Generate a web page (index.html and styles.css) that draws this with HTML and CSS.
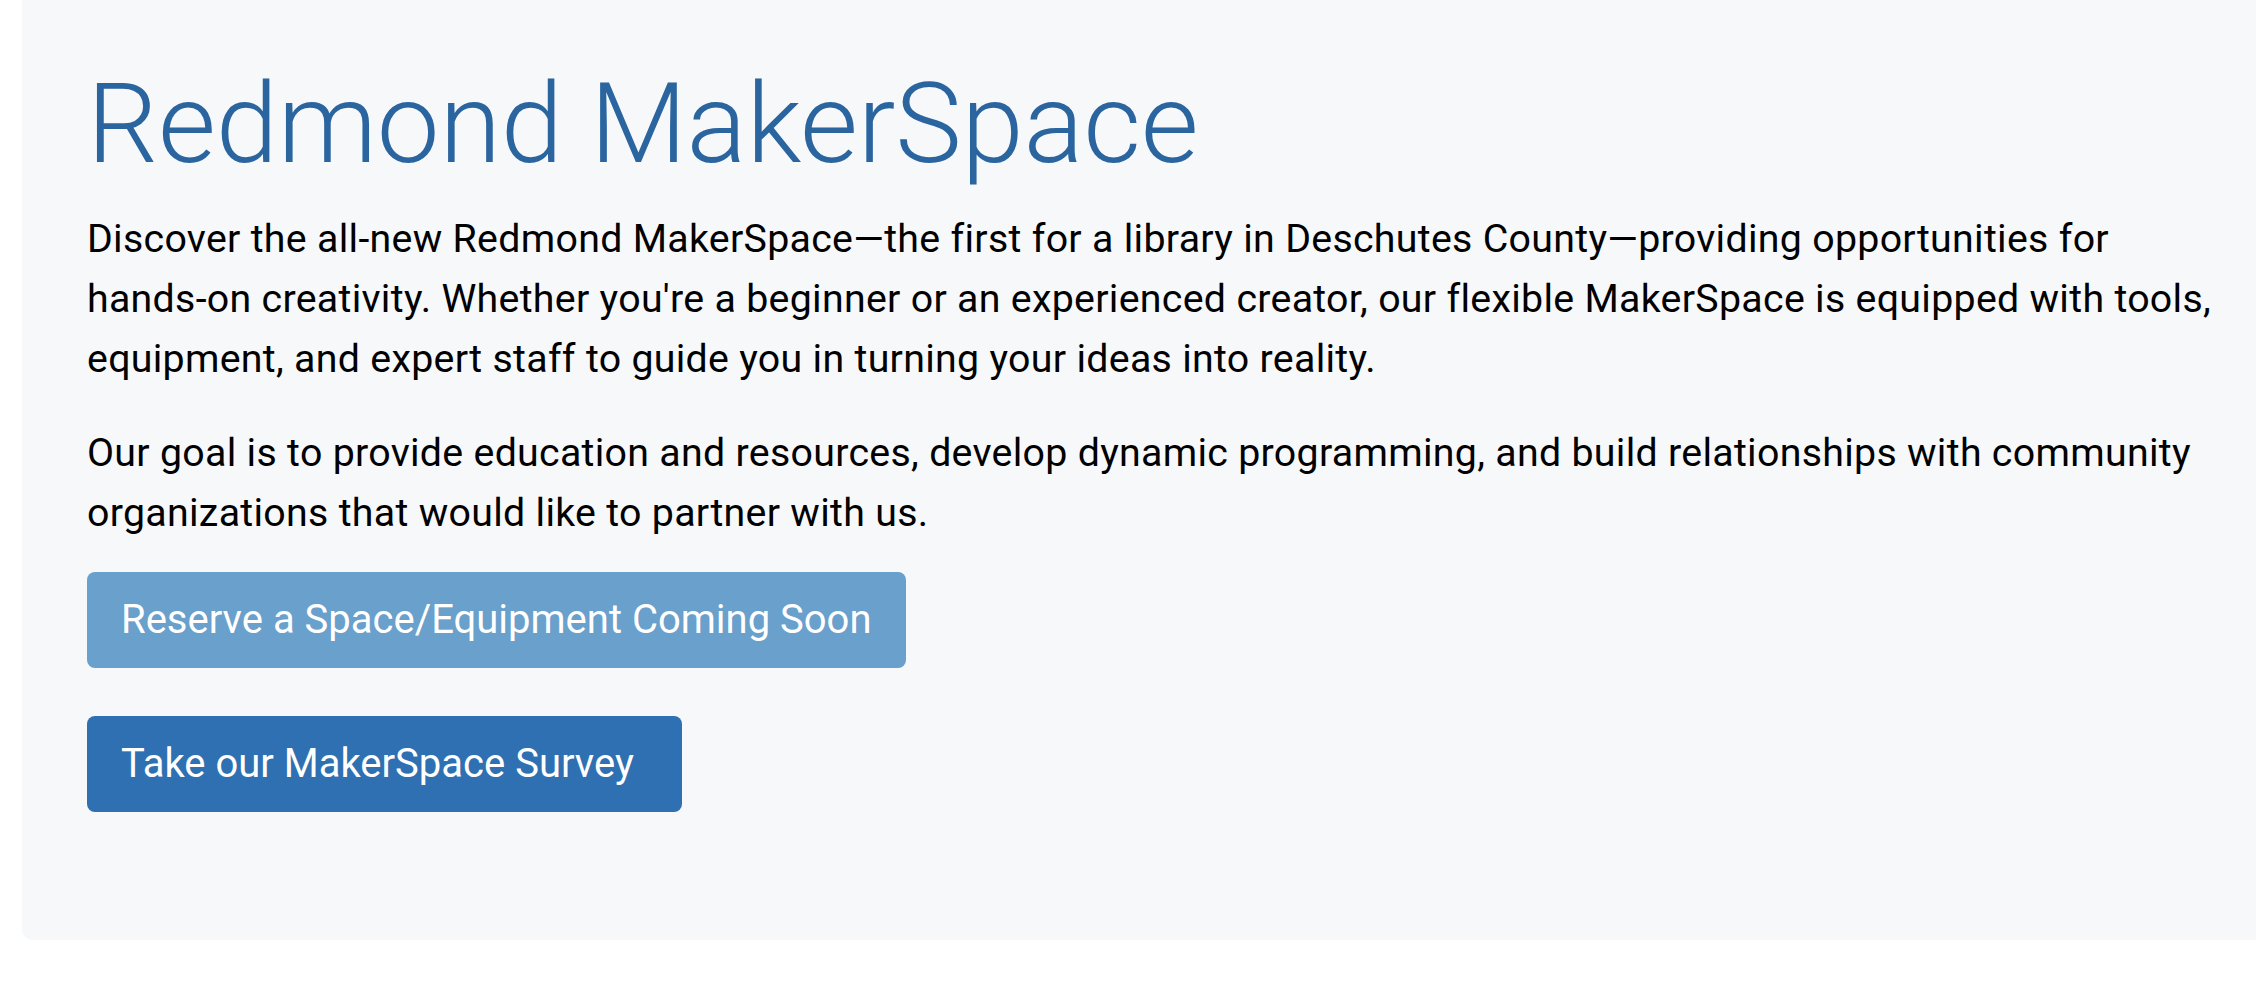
FILE: index.html
```html
<!DOCTYPE html>
<html lang="en">
<head>
<meta charset="utf-8">
<title>Redmond MakerSpace</title>
<link rel="stylesheet" href="styles.css">
</head>
<body>
<section class="panel">
  <h1 class="title">Redmond MakerSpace</h1>
  <p class="intro">Discover the all-new Redmond MakerSpace—the first for a library in Deschutes County—providing opportunities for hands-on creativity. Whether you're a beginner or an experienced creator, our flexible MakerSpace is equipped with tools, equipment, and expert staff to guide you in turning your ideas into reality.</p>
  <p class="intro">Our goal is to provide education and resources, develop dynamic programming, and build relationships with community organizations that would like to partner with us.</p>
  <div class="actions">
    <a class="btn btn-light">Reserve a Space/Equipment Coming Soon</a>
    <a class="btn btn-dark">Take our MakerSpace Survey</a>
  </div>
</section>
</body>
</html>
```

FILE: styles.css
```css
html, body {
  margin: 0;
  padding: 0;
  background: #ffffff;
}

body {
  font-family: Roboto, "Liberation Sans", sans-serif;
  color: #000000;
}

.panel {
  margin-left: 22px;
  background: #f7f8fa;
  border-bottom-left-radius: 10px;
  padding: 57px 10px 128px 65px;
  box-sizing: border-box;
  height: 940px;
}

.title {
  margin: 0;
  font-size: 112px;
  font-weight: 300;
  line-height: 1.2;
  color: #2a65a0;
  letter-spacing: -0.2px;
}

.intro {
  margin: 18px 0 0 0;
  font-size: 39.3px;
  line-height: 60px;
  letter-spacing: 0.3px;
  font-variant-ligatures: none;
  max-width: 2133px;
}

.intro + .intro {
  margin-top: 34px;
}

.actions {
  display: flex;
  flex-direction: column;
  align-items: flex-start;
  gap: 48px;
  margin-top: 29px;
}

.btn {
  display: inline-block;
  font-size: 40px;
  line-height: 60px;
  padding: 18px 34px;
  border-radius: 8px;
  color: #ffffff;
  text-decoration: none;
}

.btn-light {
  background: #69a0cc;
}

.btn-dark {
  background: #2e70b1;
  padding-right: 48px;
}
```
